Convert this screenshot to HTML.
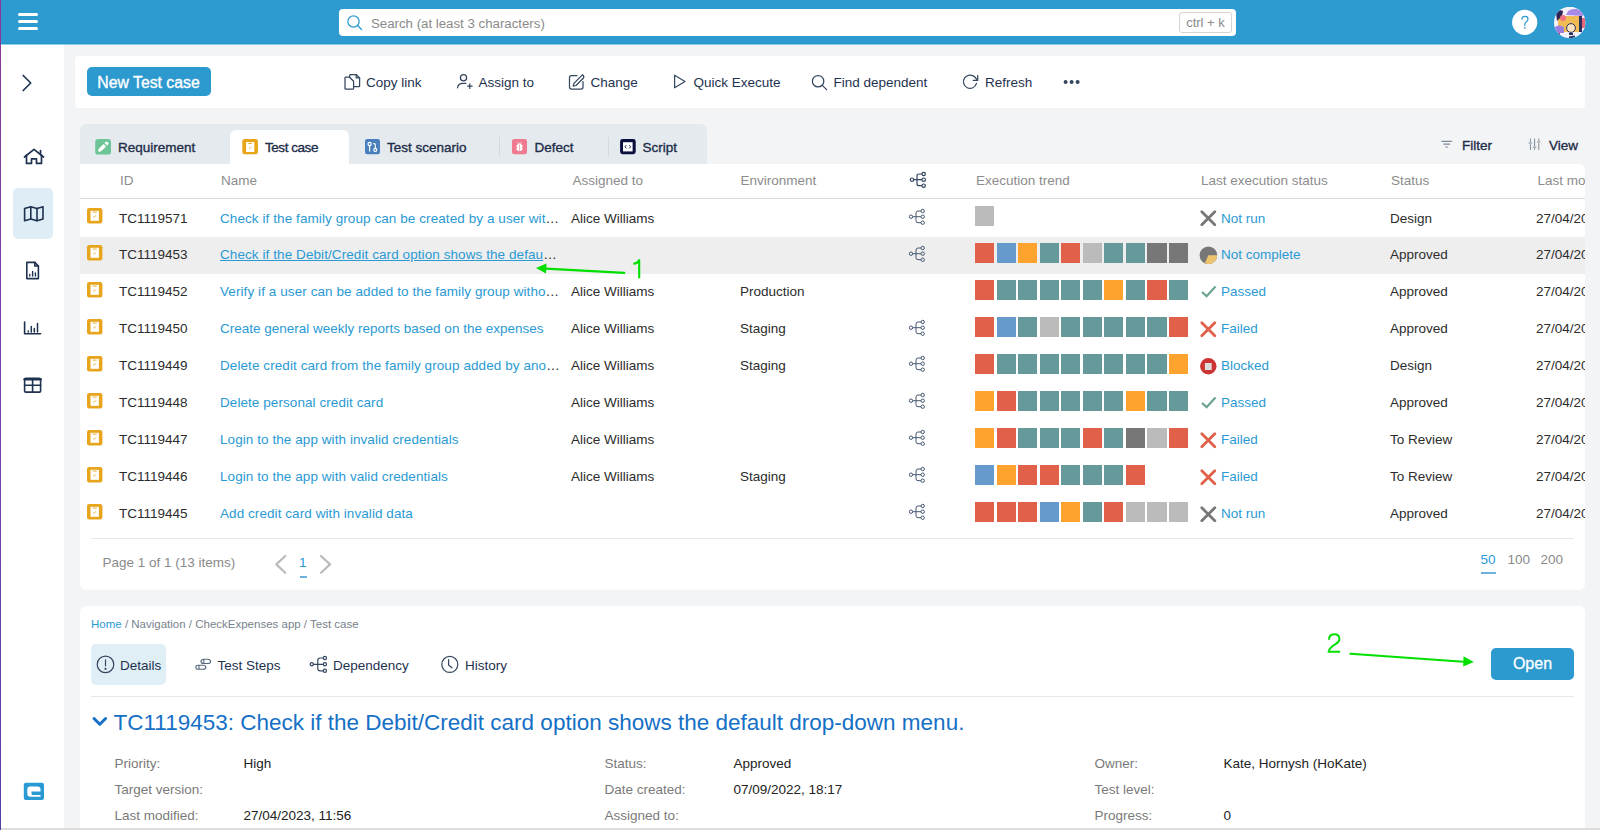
<!DOCTYPE html>
<html><head><meta charset="utf-8">
<style>
*{box-sizing:border-box;margin:0;padding:0}
html,body{width:1600px;height:830px;overflow:hidden}
body{position:relative;background:#F3F4F6;font-family:"Liberation Sans",sans-serif;color:#2C2C2C}
.a{position:absolute}
svg{position:absolute;overflow:visible}
.hdr{left:0;top:0;width:1600px;height:44px;background:#2E9BD0;box-shadow:inset 0 -1px #1C97CD,0 1px rgba(28,151,205,0.45);z-index:2}
.purple{left:0;top:0;width:1.4px;height:830px;background:linear-gradient(#8A3797,#7A44AE 50%,#553DA8);z-index:5}
.ham{left:18px;width:20px;height:3px;border-radius:2px;background:#fff}
.search{left:339px;top:9px;width:897px;height:27px;background:#fff;border-radius:4px}
.ph{left:32px;top:1px;line-height:27px;font-size:13.25px;color:#8A8A8A;white-space:nowrap}
.kbd{left:840px;top:3px;width:53px;height:21px;border:1px solid #D5D5D5;border-radius:3px;font-size:13px;color:#8A8A8A;line-height:19px;text-align:center}
.side{left:1px;top:44px;width:63px;height:786px;background:#fff}
.card{background:#fff;border-radius:4px}
.btn{background:#2C99CF;color:#fff;border-radius:4px;font-size:16px;text-align:center}
.tbt{top:73px;font-size:13.5px;color:#1E3250;line-height:20px;white-space:nowrap}
.tabs{left:80px;top:124px;width:627px;height:40px;background:#E4EAED;border-radius:6px 6px 0 0}
.tab{top:140px;font-size:13.5px;color:#1E2D4A;-webkit-text-stroke:0.35px #1E2D4A;white-space:nowrap;line-height:16px}
.tdiv{top:137px;width:1px;height:19px;background:#D3DADF}
.tcard{left:80px;top:164px;width:1505px;height:426px;background:#fff;border-radius:0 6px 6px 6px;overflow:hidden}
.row{position:absolute;left:0;width:1505px;height:37px;font-size:13.5px;line-height:37px;white-space:nowrap}
.row>span{position:absolute;top:-0.5px}
.th{color:#8C8C8C;font-size:13.5px;line-height:34px;height:34px}
.th>span{top:0!important}
.lnk{color:#2A9AD4}
.sq{position:absolute;top:6px;width:19.2px;height:20px}
.R{background:#E0604A}.B{background:#6699CC}.O{background:#FFA32F}.T{background:#669999}.G{background:#BBBBBB}.D{background:#777777}
.dcard{left:80px;top:606px;width:1505px;height:240px;background:#fff;border-radius:6px}
.lbl{color:#7A7A7A;font-size:13.5px;white-space:nowrap;line-height:20px}
.val{color:#222;font-size:13.5px;white-space:nowrap;line-height:20px}
.dt{top:656px;font-size:13.5px;color:#1E3250;line-height:20px;white-space:nowrap}
.grn{color:#00E000}
</style></head><body>
<div class="a purple"></div>
<div class="a hdr">
  <div class="a ham" style="top:13px"></div>
  <div class="a ham" style="top:20px"></div>
  <div class="a ham" style="top:27px"></div>
  <div class="a search">
    <svg style="left:0;top:0" width="40" height="27"><circle cx="14.5" cy="12.5" r="5.6" fill="none" stroke="#2E9BD0" stroke-width="1.3"/><line x1="18.6" y1="16.6" x2="22.5" y2="20.5" stroke="#2E9BD0" stroke-width="1.4" stroke-linecap="round"/></svg>
    <div class="a ph">Search (at least 3 characters)</div>
    <div class="a kbd">ctrl + k</div>
  </div>
  <svg style="left:0;top:0" width="1600" height="44"><circle cx="1524.7" cy="22.3" r="12.6" fill="#fff"/><path d="M1521.9 19.2 Q1521.9 16.4 1525 16.4 Q1528 16.4 1528 19.1 Q1528 20.9 1526 22.2 Q1524.8 23 1524.8 24.8 V25.4" fill="none" stroke="#2E9BD0" stroke-width="1.25" stroke-linecap="round"/><circle cx="1524.8" cy="27.8" r="0.9" fill="#2E9BD0"/></svg>
  <svg style="left:1554px;top:7px" width="32" height="32" viewBox="0 0 32 32">
    <defs><clipPath id="av"><circle cx="15.7" cy="15.5" r="15.7"/></clipPath></defs>
    <g clip-path="url(#av)">
      <rect width="32" height="32" fill="#F4F2F8"/>
      <path d="M12 8 Q14 1 22 2 Q30 2 29 9 Z" fill="#A98BE6"/>
      <rect x="4" y="9" width="23" height="16" fill="#F2BC55"/>
      <rect x="25" y="9" width="3" height="16" fill="#2B2F5E"/>
      <rect x="28" y="11" width="3" height="10" fill="#E8677A"/>
      <path d="M2 6 Q5 2 9 4 L8 9 L3 14 Z" fill="#2E2352"/>
      <circle cx="9" cy="11" r="3" fill="#F07080"/>
      <path d="M1 20 Q5 17 10 20 L10 26 L2 26 Z" fill="#9B7FE0"/>
      <rect x="4" y="26" width="2" height="6" fill="#A33050"/>
      <circle cx="17" cy="21" r="4.4" fill="#FBE3C0" stroke="#2B2F5E" stroke-width="1"/>
      <rect x="15" y="26" width="4" height="2" fill="#2B2F5E"/>
      <rect x="15" y="29" width="6" height="2" fill="#2B2F5E" transform="rotate(-10 18 30)"/>
    </g>
  </svg>
</div>
<div class="a side"></div>
<!-- sidebar icons -->
<svg style="left:0;top:0" width="64" height="830" fill="none" stroke="#1E3250" stroke-width="1.7" stroke-linecap="round" stroke-linejoin="round">
  <path d="M23.2 75.5 L30.7 83 L23.2 90.5"/>
  <path d="M24.5 157 L34 149.3 L43.5 157"/>
  <path d="M26.5 155.2 V163.4 H31.5 V158.8 H36.5 V163.4 H41.5 V155.2"/>
  <path d="M40.5 150.5 V154"/>
</svg>
<div class="a" style="left:12.5px;top:188px;width:40px;height:51px;background:#DFEDF6;border-radius:5px"></div>
<svg style="left:0;top:0" width="64" height="830" fill="none" stroke="#1E3250" stroke-width="1.6" stroke-linecap="round" stroke-linejoin="round">
  <path d="M24.6 208.6 L30.8 206.7 L37 208.6 L43 206.7 V218.9 L37 220.8 L30.8 218.9 L24.6 220.8 Z"/>
  <path d="M30.8 206.7 V218.9 M37 208.6 V220.8"/>
  <path d="M26.8 262.4 H34.8 L38.4 266 V278.6 H26.8 Z"/>
  <path d="M34.8 262.4 V266 H38.4"/>
  <path d="M29.8 276 V274.5 M32.6 276 V271.5 M35.4 276 V273" stroke-width="1.4"/>
  <path d="M24.6 322 V333.8 H40.6"/>
  <path d="M28.3 331 V332 M31.3 326.5 V332 M34.3 328.5 V332 M37.5 323.5 V332" stroke-width="1.5"/>
  <rect x="24.6" y="378.3" width="16" height="13.8" rx="1.2"/>
  <path d="M24.6 379.2 H40.6" stroke-width="2.4"/>
  <path d="M32.6 379 V392 M24.6 385.3 H40.6"/>
</svg>
<svg style="left:0;top:0" width="64" height="830">
  <rect x="23.8" y="782.7" width="20.2" height="17.2" rx="2" fill="#2A9AD4"/>
  <path d="M30 786.5 H37.5 Q40.5 786.5 40.5 789.5 V791.5 H31.5 V793.5 Q31.5 795 33 795 H40.5 V796.8 H30.5 Q27.3 796.8 27.3 793.6 V789.5 Q27.3 786.5 30 786.5 Z" fill="#fff"/>
</svg>

<!-- toolbar -->
<div class="a card" style="left:75px;top:56px;width:1510px;height:52px"></div>
<div class="a btn" style="left:87px;top:67px;width:124px;height:29px;line-height:31px;border-radius:5px;font-size:15.8px;-webkit-text-stroke:0.35px #fff;padding-right:1px">New Test case</div>
<svg style="left:0;top:0" width="1100" height="110" fill="none" stroke="#34475F" stroke-width="1.25" stroke-linecap="round" stroke-linejoin="round">
  <path d="M349.5 77.2 H345.8 Q345 77.2 345 78 V88.4 Q345 89.2 345.8 89.2 H352.8 Q353.6 89.2 353.6 88.4 V81.3 Z"/>
  <path d="M350.5 74.5 H356.2 L359.6 77.9 V85.9 Q359.6 86.7 358.8 86.7 H353.6 M350.5 74.5 Q349.7 74.5 349.7 75.3 V77.2"/>
  <path d="M356.2 74.5 V77.9 H359.6"/>
  <circle cx="463.5" cy="77.8" r="3.1"/>
  <path d="M457.6 87.8 Q457.8 83.3 463.2 83.3 H466"/>
  <path d="M469.8 83.8 V88.4 M467.5 86.1 H472.1"/>
  <path d="M577 75.5 H571.5 Q569.5 75.5 569.5 77.5 V87 Q569.5 89 571.5 89 H581 Q583 89 583 87 V81.5"/>
  <path d="M582.5 74.8 Q584.5 76.6 583.5 78 L576 85.5 L573.2 86.2 L573.9 83.4 L581.4 75.9 Q582 75.1 582.5 74.8 Z"/>
  <path d="M674.6 75.2 L685 81.5 L674.6 87.8 Z"/>
  <circle cx="818.1" cy="81.2" r="5.7"/>
  <path d="M822.3 85.4 L826.6 89.6"/>
  <path d="M976.5 83.4 A6.65 6.65 0 1 1 974.8 77 L977.4 80.1"/>
  <path d="M977.7 75.5 V80.4 H973.2"/>
</svg>
<svg style="left:0;top:0" width="1100" height="110"><circle cx="1065.6" cy="82" r="2" fill="#34475F"/><circle cx="1071.6" cy="82" r="2" fill="#34475F"/><circle cx="1077.6" cy="82" r="2" fill="#34475F"/></svg>
<div class="a tbt" style="left:366px">Copy link</div>
<div class="a tbt" style="left:478.5px">Assign to</div>
<div class="a tbt" style="left:590.5px">Change</div>
<div class="a tbt" style="left:693.5px">Quick Execute</div>
<div class="a tbt" style="left:833.5px">Find dependent</div>
<div class="a tbt" style="left:985px">Refresh</div>
<div class="a tabs"></div>
<div class="a" style="left:230px;top:130px;width:119px;height:34px;background:#fff;border-radius:6px 6px 0 0"></div>
<div class="a tdiv" style="left:499px"></div><div class="a tdiv" style="left:608px"></div>
<svg style="left:0;top:0" width="700" height="170">
<rect x="95.2" y="138.9" width="15.8" height="15.7" rx="3.2" fill="#6CC497"/>
<path d="M98.2 151.4 Q97.9 149.6 99.2 148.3 L103.6 143.9 L106.1 146.4 L101.7 150.8 Q100.4 152.1 98.6 151.8 Z" fill="#fff"/>
<path d="M104.5 143 L105.6 141.9 Q106.6 141 107.6 141.9 L108.1 142.4 Q109 143.4 108.1 144.4 L107 145.5 Z" fill="#fff"/>
<rect x="242.3" y="138.9" width="15.6" height="15.4" rx="2.2" fill="#E8A517"/>
<rect x="246.1" y="142.1" width="8.2" height="9.9" fill="#fff"/>
<path d="M248.3 143.5 H252" stroke="#E8A517" stroke-width="0.9"/>
<path d="M249 147.9 L249.9 148.6 L251.6 146.6" stroke="#E8A517" stroke-width="0.8" fill="none"/>
<rect x="365" y="139" width="15" height="15.2" rx="2.2" fill="#4A7FBD"/>
<circle cx="369.6" cy="144" r="1.6" fill="none" stroke="#fff" stroke-width="1.2"/>
<path d="M369.6 145.6 V151.4" stroke="#fff" stroke-width="1.2"/>
<path d="M373.3 143.6 H374.3 Q375.3 143.6 375.3 144.6 V148.5" stroke="#fff" stroke-width="1.1" fill="none"/>
<circle cx="375.3" cy="149.9" r="1.5" fill="none" stroke="#fff" stroke-width="1.2"/>
<rect x="512" y="139" width="15" height="15.2" rx="2.2" fill="#F07A8F"/>
<path d="M517 145 Q519.5 141.5 522 145 V150 Q519.5 152.5 517 150 Z" fill="#fff"/>
<path d="M517.8 142.4 L518.6 143.5 M521.2 142.4 L520.4 143.5" stroke="#fff" stroke-width="0.9"/>
<path d="M516 146 H517 M522 146 H523 M516 149 H517 M522 149 H523" stroke="#fff" stroke-width="0.9"/>
<path d="M519.5 144.5 V151.5" stroke="#F07A8F" stroke-width="0.6"/>
<rect x="620.1" y="139" width="15.6" height="15.2" rx="2.4" fill="#0B0F3D"/>
<rect x="623" y="142.2" width="9.6" height="9.2" fill="#fff"/>
<path d="M626.3 145.2 L625 146.8 L626.3 148.4 M629.3 145.2 L630.6 146.8 L629.3 148.4" stroke="#0B0F3D" stroke-width="0.9" fill="none"/>
</svg>
<div class="a tab" style="left:118px">Requirement</div>
<div class="a tab" style="left:265px;letter-spacing:-0.45px">Test case</div>
<div class="a tab" style="left:387px">Test scenario</div>
<div class="a tab" style="left:534.5px">Defect</div>
<div class="a tab" style="left:642.5px">Script</div>
<svg style="left:0;top:0" width="1600" height="170" fill="none" stroke="#7D8A9A" stroke-width="1.2" stroke-linecap="round">
<path d="M1441.8 141.3 H1451.6 M1443.8 144.2 H1449.6 M1445.8 147 H1447.6"/>
<path d="M1530.4 139 V141.5 M1530.4 144.5 V149.5 M1534.6 139 V146 M1534.6 148.5 V149.5 M1538.8 139 V140.5 M1538.8 143.5 V149.5" stroke-width="1"/>
<path d="M1529 143 H1531.8 M1533.2 147.2 H1536 M1537.4 142 H1540.2" stroke-width="1"/>
</svg>
<div class="a tab" style="left:1462px;top:138px">Filter</div>
<div class="a tab" style="left:1549px;top:138px">View</div>
<div class="a tcard">
<div class="row th" style="top:0"><span style="left:40.0px">ID</span><span style="left:141.0px">Name</span><span style="left:492.5px">Assigned to</span><span style="left:660.5px">Environment</span><span style="left:896.0px">Execution trend</span><span style="left:1121.0px">Last execution status</span><span style="left:1311.0px">Status</span><span style="left:1457.5px">Last modified</span></div>
<div class="a" style="left:0;top:34px;width:1505px;height:1px;background:#DADADA"></div>
<svg style="left:830px;top:8px" width="18" height="18" fill="none" stroke="#34475F" stroke-width="1.2"><circle cx="2" cy="7.7" r="1.7"/><circle cx="13.7" cy="2" r="1.7"/><circle cx="13.7" cy="7.7" r="1.7"/><circle cx="13.7" cy="13.7" r="1.7"/><path d="M3.7 7.7 H12 M12 2 H9 Q7 2 7 4 V11.7 Q7 13.7 9 13.7 H12"/></svg>
<div class="row" style="top:36.0px;">
<svg style="left:6.6px;top:8px" width="16" height="16"><rect x="0" y="0" width="15.4" height="15.5" rx="2.2" fill="#E6A51C"/><rect x="3.5" y="2.8" width="8.4" height="10" fill="#fff"/><path d="M5.6 4.1 H9.8" stroke="#E6A51C" stroke-width="0.9"/><path d="M6.3 8.6 L7.2 9.3 L8.9 7.3" stroke="#E6A51C" stroke-width="0.8" fill="none"/></svg>
<span style="left:39.0px">TC1119571</span>
<span style="left:140.0px"><span class="lnk" style="letter-spacing:0.08px">Check if the family group can be created by a user wit</span>…</span>
<span style="left:491.0px">Alice Williams</span>
<svg style="left:828.8px;top:8.7px" width="18" height="18" fill="none" stroke="#44586F" stroke-width="1.0"><circle cx="2" cy="7.7" r="1.7"/><circle cx="13.7" cy="2" r="1.7"/><circle cx="13.7" cy="7.7" r="1.7"/><circle cx="13.7" cy="13.7" r="1.7"/><path d="M3.7 7.7 H12 M12 2 H9 Q7 2 7 4 V11.7 Q7 13.7 9 13.7 H12"/></svg>
<div class="sq G" style="left:895.00px"></div>
<svg style="left:1120px;top:10px" width="17" height="17"><path d="M1.8 1.8 L14.8 14.8 M14.8 1.8 L1.8 14.8" stroke="#777777" stroke-width="2.8" stroke-linecap="round"/></svg>
<span class="lnk" style="left:1141.0px">Not run</span>
<span style="left:1310.0px">Design</span>
<span style="left:1456.0px">27/04/2023, 11:56</span>
</div>
<div class="row" style="top:72.95px;background:#EEEEEE;">
<svg style="left:6.6px;top:8px" width="16" height="16"><rect x="0" y="0" width="15.4" height="15.5" rx="2.2" fill="#E6A51C"/><rect x="3.5" y="2.8" width="8.4" height="10" fill="#fff"/><path d="M5.6 4.1 H9.8" stroke="#E6A51C" stroke-width="0.9"/><path d="M6.3 8.6 L7.2 9.3 L8.9 7.3" stroke="#E6A51C" stroke-width="0.8" fill="none"/></svg>
<span style="left:39.0px">TC1119453</span>
<span style="left:140.0px"><span class="lnk" style="text-decoration:underline;letter-spacing:0.08px">Check if the Debit/Credit card option shows the defau</span>…</span>
<svg style="left:828.8px;top:8.7px" width="18" height="18" fill="none" stroke="#44586F" stroke-width="1.0"><circle cx="2" cy="7.7" r="1.7"/><circle cx="13.7" cy="2" r="1.7"/><circle cx="13.7" cy="7.7" r="1.7"/><circle cx="13.7" cy="13.7" r="1.7"/><path d="M3.7 7.7 H12 M12 2 H9 Q7 2 7 4 V11.7 Q7 13.7 9 13.7 H12"/></svg>
<div class="sq R" style="left:895.00px"></div>
<div class="sq B" style="left:916.55px"></div>
<div class="sq O" style="left:938.10px"></div>
<div class="sq T" style="left:959.65px"></div>
<div class="sq R" style="left:981.20px"></div>
<div class="sq G" style="left:1002.75px"></div>
<div class="sq T" style="left:1024.30px"></div>
<div class="sq T" style="left:1045.85px"></div>
<div class="sq D" style="left:1067.40px"></div>
<div class="sq D" style="left:1088.95px"></div>
<svg style="left:1120px;top:9px" width="18" height="18"><circle cx="8.4" cy="9.3" r="8.8" fill="#777777"/><path d="M8.4 9.3 H17.2 A8.8 8.8 0 0 1 4.7 17.3 Z" fill="#ECC46E"/></svg>
<span class="lnk" style="left:1141.0px">Not complete</span>
<span style="left:1310.0px">Approved</span>
<span style="left:1456.0px">27/04/2023, 11:56</span>
</div>
<div class="row" style="top:109.9px;">
<svg style="left:6.6px;top:8px" width="16" height="16"><rect x="0" y="0" width="15.4" height="15.5" rx="2.2" fill="#E6A51C"/><rect x="3.5" y="2.8" width="8.4" height="10" fill="#fff"/><path d="M5.6 4.1 H9.8" stroke="#E6A51C" stroke-width="0.9"/><path d="M6.3 8.6 L7.2 9.3 L8.9 7.3" stroke="#E6A51C" stroke-width="0.8" fill="none"/></svg>
<span style="left:39.0px">TC1119452</span>
<span style="left:140.0px"><span class="lnk" style="letter-spacing:0.08px">Verify if a user can be added to the family group witho</span>…</span>
<span style="left:491.0px">Alice Williams</span>
<span style="left:660.0px">Production</span>
<div class="sq R" style="left:895.00px"></div>
<div class="sq T" style="left:916.55px"></div>
<div class="sq T" style="left:938.10px"></div>
<div class="sq T" style="left:959.65px"></div>
<div class="sq T" style="left:981.20px"></div>
<div class="sq T" style="left:1002.75px"></div>
<div class="sq O" style="left:1024.30px"></div>
<div class="sq T" style="left:1045.85px"></div>
<div class="sq R" style="left:1067.40px"></div>
<div class="sq T" style="left:1088.95px"></div>
<svg style="left:1120px;top:8px" width="18" height="18"><path d="M2 10 L6.6 14.2 L15.5 4.5" stroke="#6BA58F" stroke-width="2.3" fill="none"/></svg>
<span class="lnk" style="left:1141.0px">Passed</span>
<span style="left:1310.0px">Approved</span>
<span style="left:1456.0px">27/04/2023, 11:56</span>
</div>
<div class="row" style="top:146.85px;">
<svg style="left:6.6px;top:8px" width="16" height="16"><rect x="0" y="0" width="15.4" height="15.5" rx="2.2" fill="#E6A51C"/><rect x="3.5" y="2.8" width="8.4" height="10" fill="#fff"/><path d="M5.6 4.1 H9.8" stroke="#E6A51C" stroke-width="0.9"/><path d="M6.3 8.6 L7.2 9.3 L8.9 7.3" stroke="#E6A51C" stroke-width="0.8" fill="none"/></svg>
<span style="left:39.0px">TC1119450</span>
<span class="lnk" style="left:140.0px;">Create general weekly reports based on the expenses</span>
<span style="left:491.0px">Alice Williams</span>
<span style="left:660.0px">Staging</span>
<svg style="left:828.8px;top:8.7px" width="18" height="18" fill="none" stroke="#44586F" stroke-width="1.0"><circle cx="2" cy="7.7" r="1.7"/><circle cx="13.7" cy="2" r="1.7"/><circle cx="13.7" cy="7.7" r="1.7"/><circle cx="13.7" cy="13.7" r="1.7"/><path d="M3.7 7.7 H12 M12 2 H9 Q7 2 7 4 V11.7 Q7 13.7 9 13.7 H12"/></svg>
<div class="sq R" style="left:895.00px"></div>
<div class="sq B" style="left:916.55px"></div>
<div class="sq T" style="left:938.10px"></div>
<div class="sq G" style="left:959.65px"></div>
<div class="sq T" style="left:981.20px"></div>
<div class="sq T" style="left:1002.75px"></div>
<div class="sq T" style="left:1024.30px"></div>
<div class="sq T" style="left:1045.85px"></div>
<div class="sq T" style="left:1067.40px"></div>
<div class="sq R" style="left:1088.95px"></div>
<svg style="left:1120px;top:10px" width="17" height="17"><path d="M1.8 1.8 L14.8 14.8 M14.8 1.8 L1.8 14.8" stroke="#E0604A" stroke-width="2.8" stroke-linecap="round"/></svg>
<span class="lnk" style="left:1141.0px">Failed</span>
<span style="left:1310.0px">Approved</span>
<span style="left:1456.0px">27/04/2023, 11:56</span>
</div>
<div class="row" style="top:183.8px;">
<svg style="left:6.6px;top:8px" width="16" height="16"><rect x="0" y="0" width="15.4" height="15.5" rx="2.2" fill="#E6A51C"/><rect x="3.5" y="2.8" width="8.4" height="10" fill="#fff"/><path d="M5.6 4.1 H9.8" stroke="#E6A51C" stroke-width="0.9"/><path d="M6.3 8.6 L7.2 9.3 L8.9 7.3" stroke="#E6A51C" stroke-width="0.8" fill="none"/></svg>
<span style="left:39.0px">TC1119449</span>
<span style="left:140.0px"><span class="lnk" style="letter-spacing:0.08px">Delete credit card from the family group added by ano</span>…</span>
<span style="left:491.0px">Alice Williams</span>
<span style="left:660.0px">Staging</span>
<svg style="left:828.8px;top:8.7px" width="18" height="18" fill="none" stroke="#44586F" stroke-width="1.0"><circle cx="2" cy="7.7" r="1.7"/><circle cx="13.7" cy="2" r="1.7"/><circle cx="13.7" cy="7.7" r="1.7"/><circle cx="13.7" cy="13.7" r="1.7"/><path d="M3.7 7.7 H12 M12 2 H9 Q7 2 7 4 V11.7 Q7 13.7 9 13.7 H12"/></svg>
<div class="sq R" style="left:895.00px"></div>
<div class="sq T" style="left:916.55px"></div>
<div class="sq T" style="left:938.10px"></div>
<div class="sq T" style="left:959.65px"></div>
<div class="sq T" style="left:981.20px"></div>
<div class="sq T" style="left:1002.75px"></div>
<div class="sq T" style="left:1024.30px"></div>
<div class="sq T" style="left:1045.85px"></div>
<div class="sq T" style="left:1067.40px"></div>
<div class="sq O" style="left:1088.95px"></div>
<svg style="left:1120px;top:9px" width="18" height="18"><circle cx="8.3" cy="9.3" r="8.2" fill="#CC3333"/><rect x="4.9" y="6" width="6.8" height="7" fill="#DDDDDD"/></svg>
<span class="lnk" style="left:1141.0px">Blocked</span>
<span style="left:1310.0px">Design</span>
<span style="left:1456.0px">27/04/2023, 11:56</span>
</div>
<div class="row" style="top:220.75px;">
<svg style="left:6.6px;top:8px" width="16" height="16"><rect x="0" y="0" width="15.4" height="15.5" rx="2.2" fill="#E6A51C"/><rect x="3.5" y="2.8" width="8.4" height="10" fill="#fff"/><path d="M5.6 4.1 H9.8" stroke="#E6A51C" stroke-width="0.9"/><path d="M6.3 8.6 L7.2 9.3 L8.9 7.3" stroke="#E6A51C" stroke-width="0.8" fill="none"/></svg>
<span style="left:39.0px">TC1119448</span>
<span class="lnk" style="left:140.0px;letter-spacing:0.07px;">Delete personal credit card</span>
<span style="left:491.0px">Alice Williams</span>
<svg style="left:828.8px;top:8.7px" width="18" height="18" fill="none" stroke="#44586F" stroke-width="1.0"><circle cx="2" cy="7.7" r="1.7"/><circle cx="13.7" cy="2" r="1.7"/><circle cx="13.7" cy="7.7" r="1.7"/><circle cx="13.7" cy="13.7" r="1.7"/><path d="M3.7 7.7 H12 M12 2 H9 Q7 2 7 4 V11.7 Q7 13.7 9 13.7 H12"/></svg>
<div class="sq O" style="left:895.00px"></div>
<div class="sq R" style="left:916.55px"></div>
<div class="sq T" style="left:938.10px"></div>
<div class="sq T" style="left:959.65px"></div>
<div class="sq T" style="left:981.20px"></div>
<div class="sq T" style="left:1002.75px"></div>
<div class="sq T" style="left:1024.30px"></div>
<div class="sq O" style="left:1045.85px"></div>
<div class="sq T" style="left:1067.40px"></div>
<div class="sq T" style="left:1088.95px"></div>
<svg style="left:1120px;top:8px" width="18" height="18"><path d="M2 10 L6.6 14.2 L15.5 4.5" stroke="#6BA58F" stroke-width="2.3" fill="none"/></svg>
<span class="lnk" style="left:1141.0px">Passed</span>
<span style="left:1310.0px">Approved</span>
<span style="left:1456.0px">27/04/2023, 11:56</span>
</div>
<div class="row" style="top:257.7px;">
<svg style="left:6.6px;top:8px" width="16" height="16"><rect x="0" y="0" width="15.4" height="15.5" rx="2.2" fill="#E6A51C"/><rect x="3.5" y="2.8" width="8.4" height="10" fill="#fff"/><path d="M5.6 4.1 H9.8" stroke="#E6A51C" stroke-width="0.9"/><path d="M6.3 8.6 L7.2 9.3 L8.9 7.3" stroke="#E6A51C" stroke-width="0.8" fill="none"/></svg>
<span style="left:39.0px">TC1119447</span>
<span class="lnk" style="left:140.0px;letter-spacing:0.07px;">Login to the app with invalid credentials</span>
<span style="left:491.0px">Alice Williams</span>
<svg style="left:828.8px;top:8.7px" width="18" height="18" fill="none" stroke="#44586F" stroke-width="1.0"><circle cx="2" cy="7.7" r="1.7"/><circle cx="13.7" cy="2" r="1.7"/><circle cx="13.7" cy="7.7" r="1.7"/><circle cx="13.7" cy="13.7" r="1.7"/><path d="M3.7 7.7 H12 M12 2 H9 Q7 2 7 4 V11.7 Q7 13.7 9 13.7 H12"/></svg>
<div class="sq O" style="left:895.00px"></div>
<div class="sq R" style="left:916.55px"></div>
<div class="sq T" style="left:938.10px"></div>
<div class="sq T" style="left:959.65px"></div>
<div class="sq T" style="left:981.20px"></div>
<div class="sq R" style="left:1002.75px"></div>
<div class="sq T" style="left:1024.30px"></div>
<div class="sq D" style="left:1045.85px"></div>
<div class="sq G" style="left:1067.40px"></div>
<div class="sq R" style="left:1088.95px"></div>
<svg style="left:1120px;top:10px" width="17" height="17"><path d="M1.8 1.8 L14.8 14.8 M14.8 1.8 L1.8 14.8" stroke="#E0604A" stroke-width="2.8" stroke-linecap="round"/></svg>
<span class="lnk" style="left:1141.0px">Failed</span>
<span style="left:1310.0px">To Review</span>
<span style="left:1456.0px">27/04/2023, 11:56</span>
</div>
<div class="row" style="top:294.65px;">
<svg style="left:6.6px;top:8px" width="16" height="16"><rect x="0" y="0" width="15.4" height="15.5" rx="2.2" fill="#E6A51C"/><rect x="3.5" y="2.8" width="8.4" height="10" fill="#fff"/><path d="M5.6 4.1 H9.8" stroke="#E6A51C" stroke-width="0.9"/><path d="M6.3 8.6 L7.2 9.3 L8.9 7.3" stroke="#E6A51C" stroke-width="0.8" fill="none"/></svg>
<span style="left:39.0px">TC1119446</span>
<span class="lnk" style="left:140.0px;letter-spacing:0.07px;">Login to the app with valid credentials</span>
<span style="left:491.0px">Alice Williams</span>
<span style="left:660.0px">Staging</span>
<svg style="left:828.8px;top:8.7px" width="18" height="18" fill="none" stroke="#44586F" stroke-width="1.0"><circle cx="2" cy="7.7" r="1.7"/><circle cx="13.7" cy="2" r="1.7"/><circle cx="13.7" cy="7.7" r="1.7"/><circle cx="13.7" cy="13.7" r="1.7"/><path d="M3.7 7.7 H12 M12 2 H9 Q7 2 7 4 V11.7 Q7 13.7 9 13.7 H12"/></svg>
<div class="sq B" style="left:895.00px"></div>
<div class="sq O" style="left:916.55px"></div>
<div class="sq R" style="left:938.10px"></div>
<div class="sq R" style="left:959.65px"></div>
<div class="sq T" style="left:981.20px"></div>
<div class="sq T" style="left:1002.75px"></div>
<div class="sq T" style="left:1024.30px"></div>
<div class="sq R" style="left:1045.85px"></div>
<svg style="left:1120px;top:10px" width="17" height="17"><path d="M1.8 1.8 L14.8 14.8 M14.8 1.8 L1.8 14.8" stroke="#E0604A" stroke-width="2.8" stroke-linecap="round"/></svg>
<span class="lnk" style="left:1141.0px">Failed</span>
<span style="left:1310.0px">To Review</span>
<span style="left:1456.0px">27/04/2023, 11:56</span>
</div>
<div class="row" style="top:331.6px;">
<svg style="left:6.6px;top:8px" width="16" height="16"><rect x="0" y="0" width="15.4" height="15.5" rx="2.2" fill="#E6A51C"/><rect x="3.5" y="2.8" width="8.4" height="10" fill="#fff"/><path d="M5.6 4.1 H9.8" stroke="#E6A51C" stroke-width="0.9"/><path d="M6.3 8.6 L7.2 9.3 L8.9 7.3" stroke="#E6A51C" stroke-width="0.8" fill="none"/></svg>
<span style="left:39.0px">TC1119445</span>
<span class="lnk" style="left:140.0px;letter-spacing:0.07px;">Add credit card with invalid data</span>
<svg style="left:828.8px;top:8.7px" width="18" height="18" fill="none" stroke="#44586F" stroke-width="1.0"><circle cx="2" cy="7.7" r="1.7"/><circle cx="13.7" cy="2" r="1.7"/><circle cx="13.7" cy="7.7" r="1.7"/><circle cx="13.7" cy="13.7" r="1.7"/><path d="M3.7 7.7 H12 M12 2 H9 Q7 2 7 4 V11.7 Q7 13.7 9 13.7 H12"/></svg>
<div class="sq R" style="left:895.00px"></div>
<div class="sq R" style="left:916.55px"></div>
<div class="sq R" style="left:938.10px"></div>
<div class="sq B" style="left:959.65px"></div>
<div class="sq O" style="left:981.20px"></div>
<div class="sq T" style="left:1002.75px"></div>
<div class="sq R" style="left:1024.30px"></div>
<div class="sq G" style="left:1045.85px"></div>
<div class="sq G" style="left:1067.40px"></div>
<div class="sq G" style="left:1088.95px"></div>
<svg style="left:1120px;top:10px" width="17" height="17"><path d="M1.8 1.8 L14.8 14.8 M14.8 1.8 L1.8 14.8" stroke="#777777" stroke-width="2.8" stroke-linecap="round"/></svg>
<span class="lnk" style="left:1141.0px">Not run</span>
<span style="left:1310.0px">Approved</span>
<span style="left:1456.0px">27/04/2023, 11:56</span>
</div>
<div class="a" style="left:11px;top:374px;width:1483px;height:1px;background:#E3E9EC"></div>
</div>
<div class="a" style="left:102.5px;top:553px;font-size:13.5px;line-height:20px;color:#8A8A8A;white-space:nowrap">Page 1 of 1 (13 items)</div>
<svg style="left:0;top:0" width="1600" height="600" fill="none" stroke="#BBBBBB" stroke-width="2.2" stroke-linecap="round" stroke-linejoin="round">
<path d="M285.3 556 L276.3 564.4 L285.3 572.8"/><path d="M321 556 L330 564.4 L321 572.8"/></svg>
<div class="a lnk" style="left:299px;top:553px;font-size:13.5px;line-height:20px">1</div>
<div class="a" style="left:299.5px;top:576px;width:7.5px;height:1.5px;background:#6BB3DD"></div>
<div class="a lnk" style="left:1480.5px;top:550px;font-size:13.5px;line-height:20px">50</div>
<div class="a" style="left:1480.5px;top:572px;width:15px;height:2px;background:#6BB3DD"></div>
<div class="a" style="left:1507.5px;top:550px;font-size:13.5px;line-height:20px;color:#8A8A8A">100</div>
<div class="a" style="left:1540.5px;top:550px;font-size:13.5px;line-height:20px;color:#8A8A8A">200</div><div class="a dcard"></div>
<div class="a" style="left:91px;top:616px;font-size:11.5px;line-height:16px;color:#78828C;white-space:nowrap"><span style="color:#2A9AD4">Home</span> / Navigation / CheckExpenses app / Test case</div>
<div class="a" style="left:91px;top:644px;width:75px;height:40.5px;background:#E0EEF6;border-radius:5px"></div>
<svg style="left:0;top:0" width="600" height="700" fill="none" stroke="#34475F" stroke-width="1.2" stroke-linecap="round" stroke-linejoin="round">
  <circle cx="105.5" cy="664.4" r="8.3"/>
  <path d="M105.5 659.8 V665.8"/><circle cx="105.5" cy="668.8" r="0.5" fill="#34475F"/>
  <path d="M201 661.5 Q201 659.3 204 659.3 H207.5 Q210.5 659.3 210.5 661.4 Q210.5 663.5 207.5 663.5 H203.5 Q201 663.5 201 661.5 Z M203.8 659.6 V663.3" stroke="#55677D" stroke-width="1.1"/>
  <path d="M195.8 667.2 Q195.8 665.3 198.3 665.3 H203 Q205.8 665.3 205.8 667.3 Q205.8 669.3 203 669.3 H198.5 Q195.8 669.3 195.8 667.2 Z M199 665.6 V669" stroke="#55677D" stroke-width="1.1"/>
  <circle cx="311.8" cy="664.3" r="1.6"/><circle cx="324.9" cy="658" r="1.6"/><circle cx="324.9" cy="664.3" r="1.6"/><circle cx="324.9" cy="670.8" r="1.6"/>
  <path d="M313.4 664.3 H323.3 M323.3 658 H320 Q317.8 658 317.8 660.2 V668.6 Q317.8 670.8 320 670.8 H323.3"/>
  <circle cx="449.8" cy="664.4" r="8"/>
  <path d="M448.6 659.5 V665 L452 667.8"/>
</svg>
<div class="a dt" style="left:120px">Details</div>
<div class="a dt" style="left:217.5px">Test Steps</div>
<div class="a dt" style="left:333px">Dependency</div>
<div class="a dt" style="left:465px">History</div>
<div class="a" style="left:91px;top:696px;width:1483px;height:1px;background:#E3E9EC"></div>
<div class="a btn" style="left:1491px;top:648px;width:83px;height:32px;line-height:32px;border-radius:5px;-webkit-text-stroke:0.3px #fff">Open</div>
<svg style="left:0;top:0" width="200" height="830"><path d="M94 718.5 L99.8 724.3 L105.6 718.5" fill="none" stroke="#1570C6" stroke-width="3" stroke-linecap="round" stroke-linejoin="round"/></svg>
<div class="a" style="left:113.5px;top:709px;font-size:22.5px;line-height:28px;color:#1570C6;white-space:nowrap">TC1119453: Check if the Debit/Credit card option shows the default drop-down menu.</div>
<div class="a lbl" style="left:114.5px;top:754px">Priority:</div>
<div class="a lbl" style="left:114.5px;top:780px">Target version:</div>
<div class="a lbl" style="left:114.5px;top:806px">Last modified:</div>
<div class="a val" style="left:243.5px;top:754px">High</div>
<div class="a val" style="left:243.5px;top:806px">27/04/2023, 11:56</div>
<div class="a lbl" style="left:604.5px;top:754px">Status:</div>
<div class="a lbl" style="left:604.5px;top:780px">Date created:</div>
<div class="a lbl" style="left:604.5px;top:806px">Assigned to:</div>
<div class="a val" style="left:733.5px;top:754px">Approved</div>
<div class="a val" style="left:733.5px;top:780px">07/09/2022, 18:17</div>
<div class="a lbl" style="left:1094.5px;top:754px">Owner:</div>
<div class="a lbl" style="left:1094.5px;top:780px">Test level:</div>
<div class="a lbl" style="left:1094.5px;top:806px">Progress:</div>
<div class="a val" style="left:1223.5px;top:754px">Kate, Hornysh (HoKate)</div>
<div class="a val" style="left:1223.5px;top:806px">0</div>
<div class="a" style="left:0;top:828px;width:1600px;height:2px;background:#DDDDDD"></div>
<!-- annotations -->
<svg style="left:0;top:0" width="1600" height="830">
  <path d="M546 268.6 L624.2 272.9" stroke="#00E000" stroke-width="2.3" stroke-linecap="round"/>
  <path d="M536 267.9 L546.5 263.6 L546 273.6 Z" fill="#00E000"/>
  <path d="M1350.3 653.7 L1463.5 661.7" stroke="#00E000" stroke-width="2" stroke-linecap="round"/>
  <path d="M1473.8 662 L1463.5 656.3 L1463.2 666.6 Z" fill="#00E000"/>
  <path d="M633.3 263.8 Q638 263.3 639.2 259.6 V278.3" fill="none" stroke="#00E000" stroke-width="2.1"/>
  <path d="M1329 639.8 Q1329 634.3 1334.3 634.3 Q1339.4 634.3 1339.4 638.9 Q1339.4 642 1335.5 644.2 Q1329 648 1328.6 651.8 H1340.2" fill="none" stroke="#00E000" stroke-width="1.9"/>
</svg>
</body></html>
